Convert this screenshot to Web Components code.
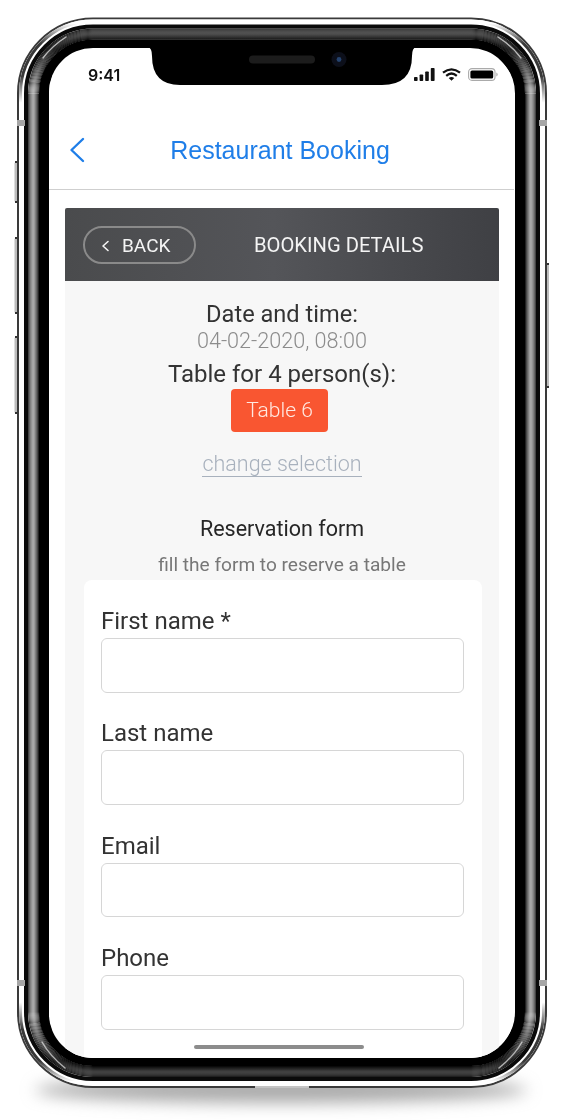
<!DOCTYPE html>
<html lang="en">
<head>
<meta charset="utf-8">
<title>Restaurant Booking</title>
<style>
    html, body { margin: 0; background: #fff; }
    body { width: 561px; height: 1120px; overflow: hidden; font-family: Roboto, "Liberation Sans", sans-serif; }
</style>
</head>
<body>
<phone-frame>
    <status-bar></status-bar>
    <app-header>Restaurant Booking</app-header>
    <booking-panel>
        <booking-bar title-text="BOOKING DETAILS"></booking-bar>
        <booking-summary></booking-summary>
        <form-card>
            <form-field label="First name *"></form-field>
            <form-field label="Last name"></form-field>
            <form-field label="Email"></form-field>
            <form-field label="Phone"></form-field>
        </form-card>
    </booking-panel>
</phone-frame>

<script>
// Ring of the bezel, given by its inset from the outer edge of the phone
function ring(from, to, paint) {
    const mid = (from + to) / 2;
    return `<rect x="${17 + mid}" y="${17.5 + mid}" width="${530 - mid * 2}" height="${1070.5 - mid * 2}"
        rx="${76 - mid}" fill="none" stroke="${paint}" stroke-width="${to - from}"/>`;
}

const greyBands = ['#444', '#666', '#808080', '#949494', '#a4a4a4', '#a8a8a8', '#9a9a9a', '#808080', '#666', '#484848', '#222']
    .map((colour, i) => ring(11 + i, 12 + i, colour)).join('');

class PhoneFrame extends HTMLElement {
    constructor() {
        super();
        this.attachShadow({ mode: 'open' });
        this.shadowRoot.innerHTML = `
            <style>
                :host { display: block; position: relative; width: 561px; height: 1120px; box-sizing: border-box; padding: 48px 47px 0 49px; }
                .bezel, .notch { position: absolute; left: 0; top: 0; }
                .bezel { filter: blur(.35px); }
                .screen {
                    position: relative;
                    height: 1010px;
                    overflow: hidden;
                    border-radius: 44px;
                    background: #fff;
                    filter: blur(.3px);
                }
                .home {
                    position: absolute;
                    left: 145px;
                    bottom: 9px;
                    width: 170px;
                    height: 4px;
                    border-radius: 2px;
                    background: #8c8c8c;
                }
            </style>
            <svg class="bezel" width="561" height="1120" viewBox="0 0 561 1120">
                <defs>
                    <filter id="soft" x="-10%" y="-200%" width="120%" height="500%"><feGaussianBlur stdDeviation="8"/></filter>
                    <linearGradient id="shade" gradientUnits="userSpaceOnUse" x1="0" y1="17" x2="0" y2="1088">
                        <stop offset="0" stop-color="#000" stop-opacity=".35"/>
                        <stop offset=".03" stop-color="#000" stop-opacity=".8"/>
                        <stop offset=".07" stop-color="#000" stop-opacity="0"/>
                        <stop offset=".93" stop-color="#000" stop-opacity="0"/>
                        <stop offset=".975" stop-color="#000" stop-opacity=".8"/>
                        <stop offset="1" stop-color="#000" stop-opacity=".35"/>
                    </linearGradient>
                    <linearGradient id="rimShade" gradientUnits="userSpaceOnUse" x1="0" y1="17" x2="0" y2="1088">
                        <stop offset=".006" stop-color="#222" stop-opacity="0"/>
                        <stop offset=".025" stop-color="#222" stop-opacity=".9"/>
                        <stop offset=".055" stop-color="#222" stop-opacity=".9"/>
                        <stop offset=".08" stop-color="#222" stop-opacity="0"/>
                        <stop offset=".92" stop-color="#222" stop-opacity="0"/>
                        <stop offset=".945" stop-color="#222" stop-opacity=".9"/>
                        <stop offset=".975" stop-color="#222" stop-opacity=".9"/>
                        <stop offset=".994" stop-color="#222" stop-opacity="0"/>
                    </linearGradient>
                </defs>
                <ellipse cx="281" cy="1090" rx="246" ry="13" fill="#aaa" filter="url(#soft)"/>
                <g fill="#bdbdbd">
                    <rect x="14.5" y="162" width="4" height="40" rx="1.5"/>
                    <rect x="14.5" y="238" width="4" height="75" rx="1.5"/>
                    <rect x="14.5" y="337" width="4" height="76" rx="1.5"/>
                    <rect x="545" y="264" width="4" height="123" rx="1.5"/>
                </g>
                <g fill="#333">
                    <rect x="15" y="161" width="3" height="2"/><rect x="15" y="201" width="3" height="2"/>
                    <rect x="15" y="237" width="3" height="2"/><rect x="15" y="312" width="3" height="2"/>
                    <rect x="15" y="336" width="3" height="2"/><rect x="15" y="412" width="3" height="2"/>
                    <rect x="546" y="263" width="3" height="2"/><rect x="546" y="386" width="3" height="2"/>
                </g>
                ${ring(0, 2, '#3a3a3a')}
                ${ring(2, 7, '#fff')}
                ${ring(2, 5, 'url(#rimShade)')}
                ${ring(7, 11, '#0a0a0a')}
                ${greyBands}
                ${ring(11, 22, 'url(#shade)')}
                ${ring(22, 32, '#000')}
                <g fill="none" stroke="#e8e8e8" stroke-linecap="round">
                    <path d="M66 37 Q52 46 43 58" stroke-width="1.4" opacity=".75"/>
                    <path d="M498 37 Q512 46 521 58" stroke-width="1.4" opacity=".75"/>
                    <path d="M42 1042 Q50 1056 65 1068" stroke-width="1.4" opacity=".7"/>
                    <path d="M522 1042 Q514 1056 499 1068" stroke-width="1.4" opacity=".7"/>
                </g>
                <g fill="#a6a6a6">
                    <rect x="17" y="120" width="8" height="6"/>
                    <rect x="539" y="120" width="8" height="6"/>
                    <rect x="17" y="980" width="8" height="6"/>
                    <rect x="539" y="980" width="8" height="6"/>
                    <rect x="255" y="1086" width="54" height="2" fill="#c4c4c4"/>
                </g>
            </svg>
            <div class="screen">
                <slot></slot>
                <div class="home"></div>
            </div>
            <svg class="notch" width="561" height="1120" viewBox="0 0 561 1120">
                <path d="M148 47 Q152 48 152 56 Q152 85 180 85 L382 85 Q412 85 412 56 Q412 48 416 47 Z" fill="#000"/>
                <rect x="249" y="55.5" width="66" height="8" rx="4" fill="#1c1c1c"/>
                <circle cx="339" cy="59.5" r="7.5" fill="#0c0f1a"/>
                <circle cx="339" cy="59.5" r="2.4" fill="#25436e"/>
            </svg>
        `;
    }
}

class StatusBar extends HTMLElement {
    constructor() {
        super();
        this.attachShadow({ mode: 'open' });
        this.shadowRoot.innerHTML = `
            <style>
                :host {
                    display: flex;
                    align-items: center;
                    justify-content: space-between;
                    box-sizing: border-box;
                    height: 52px;
                    padding: 1px 16px 0 39px;
                    font: 600 16px Inter, "Liberation Sans", sans-serif;
                    color: #111;
                }
                .icons { display: flex; align-items: center; gap: 7px; }
                svg { display: block; }
            </style>
            <span>9:41</span>
            <div class="icons">
                <svg width="21" height="13" viewBox="0 0 21 13" fill="#111">
                    <rect x="0" y="9" width="3.6" height="4" rx=".8"/>
                    <rect x="5.6" y="6.5" width="3.6" height="6.5" rx=".8"/>
                    <rect x="11.2" y="3.5" width="3.6" height="9.5" rx=".8"/>
                    <rect x="16.8" y="0" width="3.8" height="13" rx=".8"/>
                </svg>
                <svg width="19" height="13" viewBox="0 0 19 13" fill="none" stroke="#111" stroke-width="2.2">
                    <path d="M1 4.6 Q9.5 -2 18 4.6"/>
                    <path d="M4.2 7.8 Q9.5 3.2 14.8 7.8"/>
                    <path d="M9.5 12.8 L6.7 9.9 Q9.5 7.9 12.3 9.9 Z" fill="#111" stroke="none"/>
                </svg>
                <svg width="30" height="13" viewBox="0 0 30 13">
                    <rect x=".6" y=".6" width="26.4" height="11.8" rx="3.4" fill="none" stroke="#aaa" stroke-width="1.1"/>
                    <rect x="2.4" y="2.4" width="22.8" height="8.2" rx="1.6" fill="#000"/>
                    <path d="M28.2 4.4 Q29.8 5 29.8 6.5 Q29.8 8 28.2 8.6 Z" fill="#bbb"/>
                </svg>
            </div>
        `;
    }
}

class AppHeader extends HTMLElement {
    constructor() {
        super();
        this.attachShadow({ mode: 'open' });
        this.shadowRoot.innerHTML = `
            <style>
                :host {
                    display: flex;
                    align-items: center;
                    box-sizing: border-box;
                    height: 90px;
                    padding: 11px 0 0 20px;
                    border-bottom: 1px solid #cfcfcf;
                    color: #1f7ee8;
                    font: 25px "Liberation Sans", Arial, sans-serif;
                }
                svg { display: block; flex: none; }
                .title { flex: 1; text-align: center; padding-right: 39px; }
            </style>
            <svg width="16" height="26" viewBox="0 0 16 26" fill="none" stroke="currentColor" stroke-width="2.4" stroke-linecap="round" stroke-linejoin="round">
                <path d="M14 2 L2.5 13 L14 24"/>
            </svg>
            <div class="title"><slot></slot></div>
        `;
    }
}

class BookingPanel extends HTMLElement {
    constructor() {
        super();
        this.attachShadow({ mode: 'open' });
        this.shadowRoot.innerHTML = `
            <style>
                :host {
                    display: block;
                    margin: 18px 15px 0 16px;
                    min-height: 900px;
                    background: #f7f7f7;
                    color: #333;
                }
            </style>
            <slot></slot>
        `;
    }
}

class BookingBar extends HTMLElement {
    constructor() {
        super();
        this.attachShadow({ mode: 'open' });
        this.shadowRoot.innerHTML = `
            <style>
                :host {
                    display: flex;
                    align-items: center;
                    box-sizing: border-box;
                    height: 73px;
                    padding: 0 0 0 18px;
                    border-radius: 2px 2px 0 0;
                    background: linear-gradient(90deg, #4a4b4d 0%, #545559 48%, #3f4044 100%);
                    color: #f4f4f4;
                    font: 20.2px Roboto, sans-serif;
                }
                .back {
                    display: flex;
                    align-items: center;
                    box-sizing: border-box;
                    width: 113px;
                    height: 38px;
                    padding: 2px 0 0 16px;
                    gap: 12px;
                    border: 2px solid #8a8a8a;
                    border-radius: 19px;
                    font-size: 19px;
                }
                .back svg { display: block; }
                .title { margin-left: 58px; }
            </style>
            <div class="back">
                <svg width="9" height="12" viewBox="0 0 9 12" fill="none" stroke="#f4f4f4" stroke-width="1.6" stroke-linecap="round" stroke-linejoin="round">
                    <path d="M7 1.5 L2 6 L7 10.5"/>
                </svg>
                <span>BACK</span>
            </div>
            <span class="title"></span>
        `;
    }
    connectedCallback() {
        this.shadowRoot.querySelector('.title').textContent = this.getAttribute('title-text');
    }
}

class BookingSummary extends HTMLElement {
    constructor() {
        super();
        this.attachShadow({ mode: 'open' });
        this.shadowRoot.innerHTML = `
            <style>
                :host {
                    display: flex;
                    flex-direction: column;
                    align-items: center;
                    padding: 18px 0 0 0;
                    font-family: Roboto, sans-serif;
                }
                .heading { font-size: 23.6px; line-height: 30px; color: #333; }
                .when { font-size: 21.6px; font-weight: 300; line-height: 24px; color: #8c8c8c; margin-bottom: 7px; }
                .seat { font-size: 24px; margin-top: -1px; }
                .table {
                    box-sizing: border-box;
                    width: 97px;
                    height: 43px;
                    margin: 0 5px 0 0;
                    border-radius: 4px;
                    background: #f95631;
                    color: #ffe9e2;
                    font-size: 21px;
                    font-weight: 300;
                    line-height: 42px;
                    text-align: center;
                }
                .change {
                    margin-top: 20px;
                    border-bottom: 1px solid #a8b1bd;
                    color: #a8b1bd;
                    font-size: 21.5px;
                    font-weight: 300;
                    line-height: 24px;
                }
                .form-title { margin-top: 38px; font-size: 21.5px; line-height: 28px; color: #262626; }
                .form-hint { margin-top: 10px; font-size: 19.1px; line-height: 24px; color: #777; margin-bottom: 3px; }
            </style>
            <div class="heading">Date and time:</div>
            <div class="when">04-02-2020, 08:00</div>
            <div class="heading seat">Table for 4 person(s):</div>
            <div class="table">Table 6</div>
            <div class="change">change selection</div>
            <div class="form-title">Reservation form</div>
            <div class="form-hint">fill the form to reserve a table</div>
        `;
    }
}

class FormCard extends HTMLElement {
    constructor() {
        super();
        this.attachShadow({ mode: 'open' });
        this.shadowRoot.innerHTML = `
            <style>
                :host {
                    display: flex;
                    flex-direction: column;
                    gap: 24.9px;
                    margin: 0 17px 0 19px;
                    padding: 25px 18px 40px 17px;
                    border-radius: 8px;
                    background: #fff;
                }
            </style>
            <slot></slot>
        `;
    }
}

class FormField extends HTMLElement {
    constructor() {
        super();
        this.attachShadow({ mode: 'open' });
        this.shadowRoot.innerHTML = `
            <style>
                :host { display: block; font-family: Roboto, sans-serif; }
                label { display: block; font-size: 24px; line-height: 33px; color: #333; }
                input {
                    display: block;
                    box-sizing: border-box;
                    width: 100%;
                    height: 54.5px;
                    border: 1.5px solid #d6d6d6;
                    border-radius: 6px;
                    background: #fff;
                    font: inherit;
                }
            </style>
            <label></label>
            <input type="text">
        `;
    }
    connectedCallback() {
        this.shadowRoot.querySelector('label').textContent = this.getAttribute('label');
    }
}

customElements.define('phone-frame', PhoneFrame);
customElements.define('status-bar', StatusBar);
customElements.define('app-header', AppHeader);
customElements.define('booking-panel', BookingPanel);
customElements.define('booking-bar', BookingBar);
customElements.define('booking-summary', BookingSummary);
customElements.define('form-card', FormCard);
customElements.define('form-field', FormField);
</script>
</body>
</html>
